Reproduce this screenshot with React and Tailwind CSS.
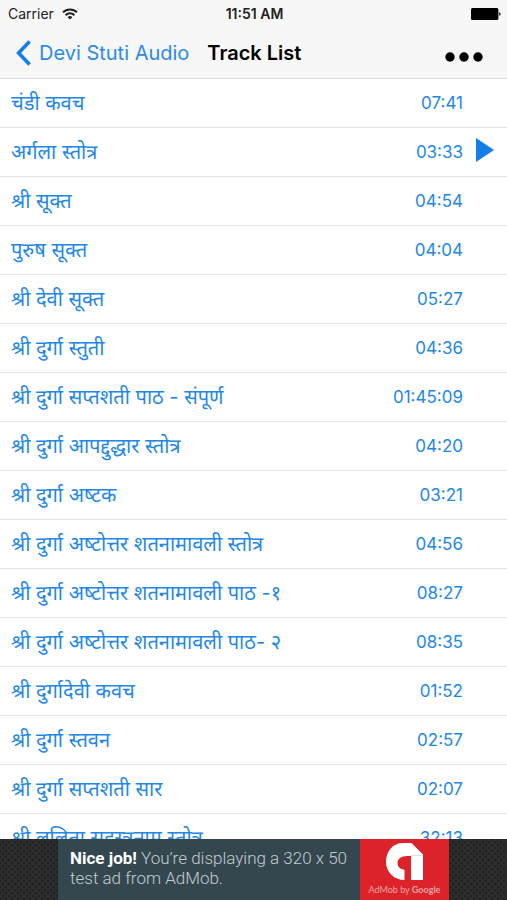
import React, { useState } from 'react';

const initialTracks = [
    { title: 'चंडी कवच', duration: '07:41' },
    { title: 'अर्गला स्तोत्र', duration: '03:33' },
    { title: 'श्री सूक्त', duration: '04:54' },
    { title: 'पुरुष सूक्त', duration: '04:04' },
    { title: 'श्री देवी सूक्त', duration: '05:27' },
    { title: 'श्री दुर्गा स्तुती', duration: '04:36' },
    { title: 'श्री दुर्गा सप्तशती पाठ - संपूर्ण', duration: '01:45:09' },
    { title: 'श्री दुर्गा आपद्दुद्धार स्तोत्र', duration: '04:20' },
    { title: 'श्री दुर्गा अष्\u200Dटक', duration: '03:21' },
    { title: 'श्री दुर्गा अष्\u200Dटोत्तर शतनामावली स्तोत्र', duration: '04:56' },
    { title: 'श्री दुर्गा अष्\u200Dटोत्तर शतनामावली पाठ -१', duration: '08:27' },
    { title: 'श्री दुर्गा अष्\u200Dटोत्तर शतनामावली पाठ- २', duration: '08:35' },
    { title: 'श्री दुर्गादेवी कवच', duration: '01:52' },
    { title: 'श्री दुर्गा स्तवन', duration: '02:57' },
    { title: 'श्री दुर्गा सप्तशती सार', duration: '02:07' },
    { title: 'श्री ललिता सहस्त्रनाम स्तोत्र', duration: '32:13' },
];

const StatusBar = () => (
    <div className="grid grid-cols-3 items-center h-[27px] pl-2 pr-1.5 text-[14px] text-[#222]">
        <div className="flex items-center gap-2">
            <span>Carrier</span>
            <svg viewBox="0 0 16 12" className="w-4 h-3" fill="none" stroke="currentColor" strokeWidth="2">
                <path d="M1 4.4a10 10 0 0 1 14 0" />
                <path d="M3.6 7.2a6.2 6.2 0 0 1 8.8 0" />
                <path d="M8 11.6 5.6 9.2a3.4 3.4 0 0 1 4.8 0Z" fill="currentColor" stroke="none" />
            </svg>
        </div>
        <span className="text-center font-semibold whitespace-nowrap">11:51 AM</span>
        <svg viewBox="0 0 30 12" className="w-[30px] h-3 justify-self-end" fill="#000">
            <rect x="0" y="0" width="27.4" height="12" rx="1.6" />
            <path d="M28.2 4.2c1.8.3 1.8 3.3 0 3.6Z" />
        </svg>
    </div>
);

const NavBar = () => (
    <div className="flex items-center h-[51px] pl-4 pr-6">
        <a href="#back" className="flex items-center gap-2 text-[20px] text-[#2b8be6] whitespace-nowrap">
            <svg viewBox="0 0 15 26" className="w-[15px] h-[26px]" fill="none" stroke="#147ee8" strokeWidth="3.6">
                <path d="M13.6 1.4 2.6 13l11 11.6" />
            </svg>
            Devi Stuti Audio
        </a>
        <h1 className="ml-[18px] text-[20px] font-semibold text-black whitespace-nowrap">Track List</h1>
        <button aria-label="More" className="ml-auto pt-2">
            <svg viewBox="0 0 38 10" className="w-[38px] h-[10px]" fill="#000">
                <circle cx="5" cy="5" r="4.7" />
                <circle cx="19" cy="5" r="4.7" />
                <circle cx="33" cy="5" r="4.7" />
            </svg>
        </button>
    </div>
);

const TrackRow = ({ track, playing, onPlay }) => (
    <li className="border-t border-[#e4e4e4] first:border-[#dcdcdc]">
        <button onClick={onPlay} className="flex items-center w-full h-full pl-[11px] pr-3 text-left text-[#2387e6]">
            <span className="flex-1 text-[20px] leading-6 whitespace-nowrap">{track.title}</span>
            <span className="text-[17px] leading-6">{track.duration}</span>
            <span className="w-8 pl-[13px]">
                {playing && (
                    <svg viewBox="0 0 18 24" className="w-[18px] h-6 mb-1" fill="#147ee8">
                        <path d="M0 0v24l18-12Z" />
                    </svg>
                )}
            </span>
        </button>
    </li>
);

const AdBanner = () => (
    <div className="flex justify-center h-[61px] bg-[#2c2c2c] bg-[radial-gradient(#1f1f1f_30%,transparent_35%),radial-gradient(#1f1f1f_30%,transparent_35%)] bg-[length:6px_6px] bg-[position:0_0,3px_3px]">
        <a href="#ad" className="flex w-[391px] font-[Roboto,sans-serif]">
            <p className="flex-1 pl-3 pt-[9px] bg-[#34474f] text-[17px] leading-5 font-light text-[#c3ccd0] whitespace-nowrap">
                <strong className="font-bold text-white">Nice job!</strong> You’re displaying a 320 x 50
                <br />
                test ad from AdMob.
            </p>
            <div className="flex flex-col items-center w-[89px] pt-1 bg-[#dc2329]">
                <svg viewBox="0 0 37 37" className="w-[37px] h-[37px]">
                    <path
                        d="M18.5 37C8 37 0 29 0 19 0 8 7 0 17 0h8.5L37 11.5V37H25V13h-4C15 13 11.5 16 11.5 20c0 4 3 6.5 7 6.5Z"
                        fill="#fff"
                    />
                    <path d="M25 12.5h11.5" stroke="#d8d8d8" strokeWidth="0.8" />
                </svg>
                <span className="mt-1 font-[Lato,sans-serif] text-[9px] leading-3 text-[#f5a3a5] whitespace-nowrap">
                    AdMob by <span className="font-bold">Google</span>
                </span>
            </div>
        </a>
    </div>
);

const App = () => {
    const [current, setCurrent] = useState(1);

    return (
        <div className="flex flex-col h-screen bg-white font-[Inter,'Noto_Sans_Devanagari','Noto_Sans',sans-serif]">
            {/* Header */}
            <header className="shrink-0 bg-[#f7f7f7]">
                <StatusBar />
                <NavBar />
            </header>

            {/* Tracks */}
            <main className="flex-1 min-h-0 overflow-hidden">
                <ul className="grid auto-rows-[49px]">
                    {initialTracks.map((track, i) => (
                        <TrackRow key={track.title} track={track} playing={i === current} onPlay={() => setCurrent(i)} />
                    ))}
                </ul>
            </main>

            <AdBanner />
        </div>
    );
};

export default App;
